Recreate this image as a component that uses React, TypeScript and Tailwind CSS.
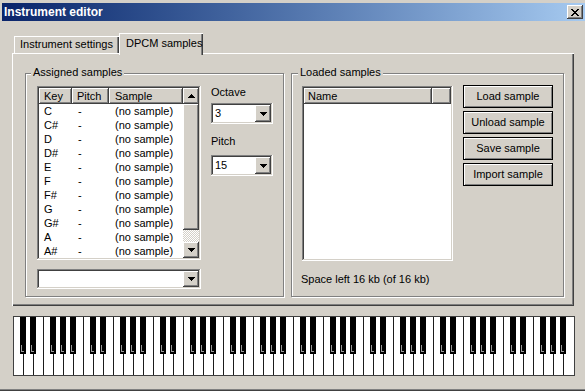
import React from "react";

const RAISED =
  "bg-[#d4d0c8] shadow-[inset_-1px_-1px_#404040,inset_1px_1px_#fff,inset_-2px_-2px_#808080,inset_2px_2px_#d4d0c8]";
const SUNKEN =
  "shadow-[inset_-1px_-1px_#fff,inset_1px_1px_#808080,inset_-2px_-2px_#d4d0c8,inset_2px_2px_#404040]";
const HDR =
  "bg-[#d4d0c8] shadow-[inset_-1px_-1px_#404040,inset_1px_1px_#fff,inset_-2px_-2px_#808080]";
const BTN =
  "border border-black bg-[#d4d0c8] shadow-[inset_1px_1px_#fff,inset_-1px_-1px_#808080]";

function Tri({ up }: { up?: boolean }) {
  return (
    <svg width="7" height="4" viewBox="0 0 7 4" className="block" shapeRendering="crispEdges">
      {up ? (
        <path d="M3 0h1v1h1v1h1v1h1v1H0V3h1V2h1V1h1z" fill="#000" />
      ) : (
        <path d="M0 0h7v1H6v1H5v1H4v1H3V3H2V2H1V1H0z" fill="#000" />
      )}
    </svg>
  );
}

function CloseGlyph() {
  const rows = [
    "XX....XX",
    ".XX..XX.",
    "..XXXX..",
    "...XX...",
    "..XXXX..",
    ".XX..XX.",
    "XX....XX",
  ];
  const rects: React.ReactElement[] = [];
  rows.forEach((r, y) =>
    r.split("").forEach((c, x) => {
      if (c === "X") rects.push(<rect key={`${x}-${y}`} x={x} y={y} width="1" height="1" fill="#000" />);
    })
  );
  return (
    <svg width="8" height="7" viewBox="0 0 8 7" shapeRendering="crispEdges" className="block">
      {rects}
    </svg>
  );
}

function DropBtn() {
  return (
    <div className={`w-[16px] h-full flex items-center justify-center ${RAISED}`}>
      <Tri />
    </div>
  );
}

function Piano() {
  const whites: React.ReactElement[] = [];
  for (let i = 1; i < 56; i++) {
    whites.push(<line key={`w${i}`} x1={i * 10 + 0.5} y1={0} x2={i * 10 + 0.5} y2={60} stroke="#1a1a1a" />);
  }
  const blacks: React.ReactElement[] = [];
  const offs = [10, 20, 40, 50, 60];
  for (let o = 0; o < 8; o++) {
    offs.forEach((b, j) => {
      const cx = o * 70 + b;
      const x = cx - 3;
      blacks.push(
        <g key={`b${o}-${j}`}>
          <rect x={x} y={1} width={6} height={37} fill="#000" />
          <rect x={x + 1} y={29} width={1} height={6} fill="#9a9a9a" />
          <rect x={x + 1} y={35} width={3} height={1} fill="#9a9a9a" />
        </g>
      );
    });
  }
  return (
    <svg width="562" height="60" viewBox="0 0 562 60" shapeRendering="crispEdges" className="block">
      <rect x="0" y="0" width="562" height="60" fill="#fff" />
      {whites}
      {blacks}
      <rect x="0.5" y="0.5" width="561" height="59" fill="none" stroke="#404040" />
    </svg>
  );
}

export default function App() {
  const keys = ["C", "C#", "D", "D#", "E", "F", "F#", "G", "G#", "A", "A#"];
  return (
    <div className="w-[585px] h-[391px] bg-[#d4d0c8] overflow-hidden flex flex-col font-['Liberation_Sans',Arial,sans-serif] text-[11px] text-black shadow-[inset_0_-1px_#404040,inset_0_-2px_#808080]">
      {/* Title bar */}
      <div className="mt-[3px] ml-[2px] h-[18px] flex items-center justify-between bg-linear-to-r from-[#0a246a] to-[#a6caf0]">
        <span className="pl-[2px] text-white font-bold text-[12px] leading-[18px]">Instrument editor</span>
        <div className={`mr-[2px] w-[16px] h-[14px] flex items-center justify-center ${RAISED}`}>
          <CloseGlyph />
        </div>
      </div>

      {/* Tabs */}
      <div className="mt-[12px] ml-[14px] h-[20px] flex items-end">
        <div className="w-[105px] h-[17px] pl-[6px] leading-[17px] shadow-[inset_1px_1px_#fff,inset_-1px_0_#404040,inset_-2px_0_#808080]">
          Instrument settings
        </div>
        <div className="relative z-10 w-[84px] h-[22px] -mb-[2px] bg-[#d4d0c8] pl-[7px] pt-[3px] leading-[14px] shadow-[inset_1px_1px_#fff,inset_-1px_0_#404040,inset_-2px_0_#808080]">
          DPCM samples
        </div>
      </div>

      {/* Tab panel */}
      <div className="ml-[12px] w-[562px] h-[253px] pl-[13px] pt-[20px] flex gap-[7px] shadow-[inset_1px_1px_#fff,inset_-1px_-1px_#404040,inset_-2px_-2px_#808080]">
        {/* Assigned samples */}
        <div className="relative w-[259px] h-[224px] border border-[#808080] shadow-[inset_1px_1px_#fff,1px_1px_#fff] pl-[11px] pt-[12px] flex">
          <div className="absolute left-[5px] -top-[8px] px-[2px] bg-[#d4d0c8] leading-[13px]">Assigned samples</div>
          <div className="flex flex-col">
            <div className={`w-[164px] h-[174px] bg-white p-[2px] flex ${SUNKEN}`}>
              <div className="flex-1 flex flex-col">
                <div className="flex h-[16px] leading-[16px]">
                  <div className={`w-[33px] pl-[5px] ${HDR}`}>Key</div>
                  <div className={`w-[37px] pl-[5px] ${HDR}`}>Pitch</div>
                  <div className={`flex-1 pl-[6px] ${HDR}`}>Sample</div>
                </div>
                {keys.map((k) => (
                  <div key={k} className="flex h-[14px] leading-[14px]">
                    <div className="w-[33px] pl-[5px]">{k}</div>
                    <div className="w-[37px] pl-[6px]">-</div>
                    <div className="flex-1 pl-[6px]">(no sample)</div>
                  </div>
                ))}
              </div>
              <div className="w-[16px] flex flex-col">
                <div className={`h-[16px] flex items-center justify-center ${RAISED}`}>
                  <Tri up />
                </div>
                <div className={`h-[126px] ${RAISED}`} />
                <div className="flex-1 bg-[image:repeating-conic-gradient(#fff_0_25%,#d4d0c8_0_50%)] bg-[length:2px_2px]" />
                <div className={`h-[16px] flex items-center justify-center ${RAISED}`}>
                  <Tri />
                </div>
              </div>
            </div>
            <div className={`mt-[9px] w-[164px] h-[20px] bg-white p-[2px] flex ${SUNKEN}`}>
              <div className="flex-1" />
              <DropBtn />
            </div>
          </div>
          <div className="ml-[10px] flex flex-col">
            <div className="h-[13px] leading-[13px]">Octave</div>
            <div className={`mt-[4px] w-[62px] h-[21px] bg-white p-[2px] flex ${SUNKEN}`}>
              <div className="flex-1 pl-[2px] leading-[17px]">3</div>
              <DropBtn />
            </div>
            <div className="mt-[11px] h-[13px] leading-[13px]">Pitch</div>
            <div className={`mt-[7px] w-[62px] h-[21px] bg-white p-[2px] flex ${SUNKEN}`}>
              <div className="flex-1 pl-[2px] leading-[17px]">15</div>
              <DropBtn />
            </div>
          </div>
        </div>

        {/* Loaded samples */}
        <div className="relative w-[273px] h-[224px] border border-[#808080] shadow-[inset_1px_1px_#fff,1px_1px_#fff] pl-[10px] pt-[12px] flex flex-col">
          <div className="absolute left-[6px] -top-[8px] px-[2px] bg-[#d4d0c8] leading-[13px]">Loaded samples</div>
          <div className="flex">
            <div className={`w-[151px] h-[175px] bg-white p-[2px] flex flex-col ${SUNKEN}`}>
              <div className="flex h-[16px] leading-[16px]">
                <div className={`w-[128px] pl-[4px] ${HDR}`}>Name</div>
                <div className={`flex-1 ${HDR}`} />
              </div>
            </div>
            <div className="ml-[10px] -mt-[1px] flex flex-col gap-[3px]">
              <div className={`w-[90px] h-[23px] flex items-center justify-center ${BTN}`}>Load sample</div>
              <div className={`w-[90px] h-[23px] flex items-center justify-center ${BTN}`}>Unload sample</div>
              <div className={`w-[90px] h-[23px] flex items-center justify-center ${BTN}`}>Save sample</div>
              <div className={`w-[90px] h-[23px] flex items-center justify-center ${BTN}`}>Import sample</div>
            </div>
          </div>
          <div className="mt-[12px] -ml-[1px] h-[13px] leading-[13px]">Space left 16 kb (of 16 kb)</div>
        </div>
      </div>

      {/* Piano */}
      <div className="mt-[10px] ml-[13px]">
        <Piano />
      </div>
    </div>
  );
}
